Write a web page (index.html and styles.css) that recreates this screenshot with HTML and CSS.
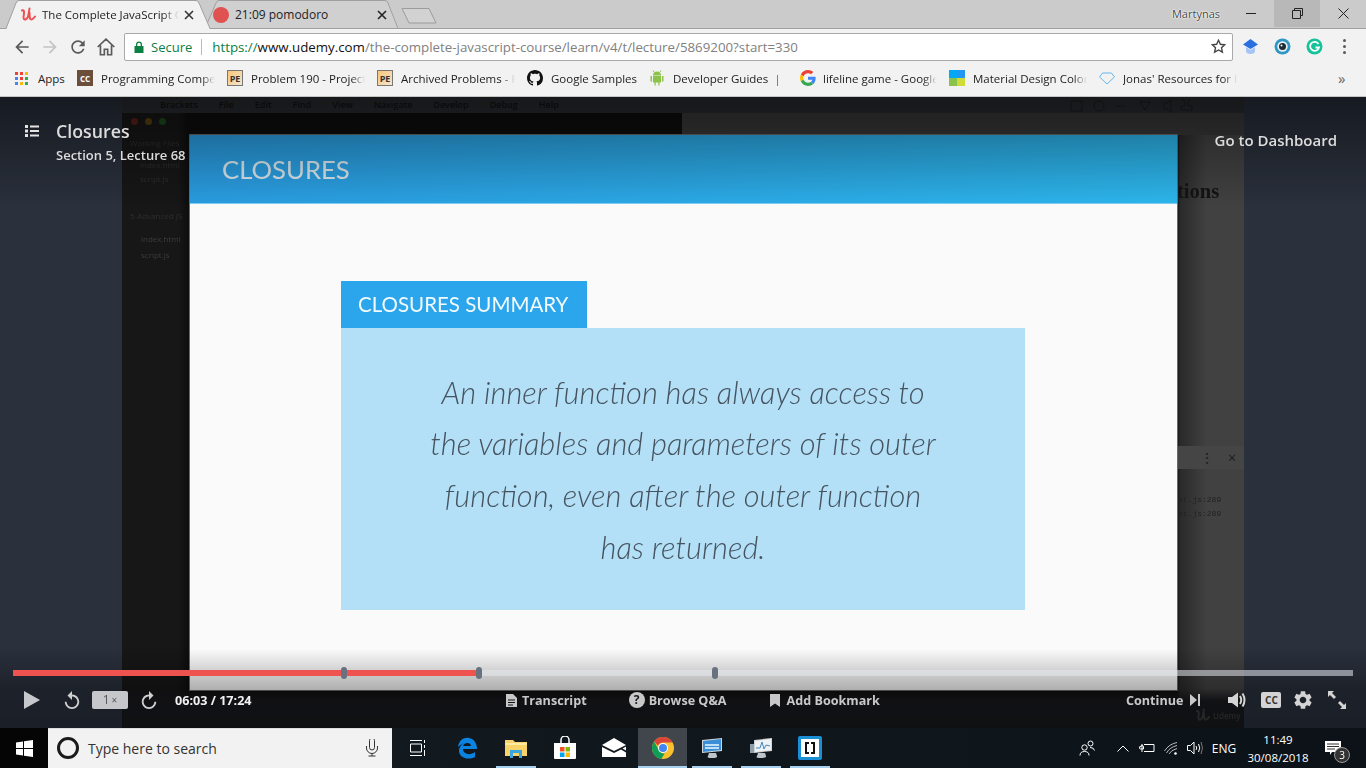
FILE: index.html
```html
<!DOCTYPE html>
<html>
  <head>
    <meta charset="UTF-8">
    <title>Closures - The Complete JavaScript Course</title>
    <link rel="stylesheet" href="styles.css">
  </head>
  <body>
    <div class="tabstrip">
      <svg class="tab-shapes" width="440" height="29" viewBox="0 0 440 29">
        <path d="M402 8.5h27l7 14.5h-27z" fill="#d2d2d2" stroke="#9c9c9c"/>
        <path d="M205 28.5L216 3q1-2.500 3-2.500h166q2 0 3 2.500l10 25.500" fill="#d0d0d0" stroke="#a0a0a0"/>
        <path d="M0 28.500h6L16 3q1-2.500 3-2.500h177q2 0 3 2.500l11 25.500h230" fill="#f2f2f2" stroke="#a0a0a0"/>
        <path d="M7 28.500h202" stroke="#f2f2f2" stroke-width="1.500"/>
      </svg>
      <div class="tab tab-active">
        <svg class="tab-icon" width="15" height="15" viewBox="0 0 15 15"><path d="M1 3.500q2-1 2 1.500 0 3-.5 5 0 3 2 2.500 2.500-1 3-5l1-6M8.500 5.500q0 4 .5 6 .8 1.500 2.500.5 1.500-1 2.500-2.500" fill="none" stroke="#ec5252" stroke-width="2" stroke-linecap="round"/></svg>
        <span class="tab-title">The Complete JavaScript Course</span>
        <svg class="tab-close" width="10" height="10" viewBox="0 0 10 10"><path d="M1 1l8 8M9 1l-8 8" stroke="#333" stroke-width="1.600"/></svg>
      </div>
      <div class="tab tab-second">
        <span class="tab-dot"></span>
        <span class="tab-title">21:09 pomodoro</span>
        <svg class="tab-close" width="10" height="10" viewBox="0 0 10 10"><path d="M1 1l8 8M9 1l-8 8" stroke="#222" stroke-width="1.600"/></svg>
      </div>
      <div class="window-controls">
        <span class="window-user">Martynas</span>
        <span class="window-btn"><svg width="11" height="11" viewBox="0 0 11 11"><path d="M0 5.500h10" stroke="#222"/></svg></span>
        <span class="window-btn window-btn-hover"><svg width="11" height="11" viewBox="0 0 11 11"><path d="M2.500 2.500V.5h8v7h-2M.5 2.500h8v8h-8z" fill="none" stroke="#222"/></svg></span>
        <span class="window-btn"><svg width="11" height="11" viewBox="0 0 11 11"><path d="M.5.5l10 10M10.500.5l-10 10" stroke="#222"/></svg></span>
      </div>
    </div>

    <div class="toolbar">
      <span class="tool-btn"><svg width="20" height="20" viewBox="0 0 24 24"><path d="M20 11H7.830l5.590-5.590L12 4l-8 8 8 8 1.410-1.410L7.830 13H20v-2z" fill="#5a5a5a"/></svg></span>
      <span class="tool-btn"><svg width="20" height="20" viewBox="0 0 24 24"><path d="M4 11h12.170l-5.590-5.590L12 4l8 8-8 8-1.410-1.410L16.170 13H4v-2z" fill="#c4c4c4"/></svg></span>
      <span class="tool-btn"><svg width="20" height="20" viewBox="0 0 24 24"><path d="M17.650 6.350C16.200 4.900 14.210 4 12 4c-4.420 0-7.990 3.580-7.990 8s3.570 8 7.990 8c3.730 0 6.840-2.550 7.730-6h-2.080c-.82 2.330-3.040 4-5.650 4-3.310 0-6-2.690-6-6s2.690-6 6-6c1.660 0 3.140.69 4.220 1.780L13 11h7V4l-2.350 2.350z" fill="#5a5a5a"/></svg></span>
      <span class="tool-btn"><svg width="20" height="20" viewBox="0 0 18 18"><path d="M1.500 9L9 2l7.500 7M4 7.500V16h3.500v-5h3v5H14V7.500" fill="none" stroke="#5a5a5a" stroke-width="1.500"/></svg></span>
      <div class="address">
        <svg width="10" height="12" viewBox="0 0 10 12"><path d="M2 5V3.500a3 3 0 0 1 6 0V5h1.500v7H.5V5zm1.300 0h3.400V3.500a1.700 1.700 0 0 0-3.400 0z" fill="#0b8043"/></svg>
        <span class="secure">Secure</span>
        <span class="address-sep"></span>
        <span class="url"><span class="url-scheme">https://</span><span class="url-host">www.udemy.com</span>/the-complete-javascript-course/learn/v4/t/lecture/5869200?start=330</span>
        <svg class="star" width="15" height="15" viewBox="0 0 15 15"><path d="M7.500 1.300l1.900 4 4.300.5-3.200 3 .9 4.400-3.900-2.200-3.900 2.200.9-4.400-3.200-3 4.300-.5z" fill="none" stroke="#444" stroke-width="1.400"/></svg>
      </div>
      <span class="ext-btn"><svg width="17" height="17" viewBox="0 0 17 17"><path d="M8.500 1L16 6.500 8.500 11 1 6.500z" fill="#2a6fe0"/><path d="M4 9v4q0 3 4.500 3t4.500-3V9l-4.500 3z" fill="#a6c4f7"/></svg></span>
      <span class="ext-btn"><svg width="17" height="17" viewBox="0 0 17 17"><circle cx="8.500" cy="8.500" r="8" fill="#2f97c4"/><circle cx="8.500" cy="8.500" r="5.200" fill="#e8f2f6"/><circle cx="8.500" cy="8.500" r="3.500" fill="#1b2a33"/><circle cx="7.500" cy="7.500" r="1" fill="#fff"/></svg></span>
      <span class="ext-btn"><svg width="17" height="17" viewBox="0 0 17 17"><circle cx="8.500" cy="8.500" r="8" fill="#15c39a"/><path d="M12.500 6A4.500 4.500 0 1 0 13 9.500H9.500" fill="none" stroke="#fff" stroke-width="1.800"/></svg></span>
      <span class="menu-dots"><i></i><i></i><i></i></span>
    </div>

    <div class="bookmarks">
      <div class="bookmark bookmark-apps">
        <span class="apps-grid"><i class="c1"></i><i class="c2"></i><i class="c3"></i><i class="c4"></i><i class="c1"></i><i class="c5"></i><i class="c4"></i><i class="c3"></i><i class="c5"></i></span>
        <span class="bookmark-label">Apps</span>
      </div>
      <div class="bookmark">
        <span class="fav-cc">CC</span>
        <span class="bookmark-label">Programming Compe</span>
      </div>
      <div class="bookmark">
        <span class="fav-pe">PE</span>
        <span class="bookmark-label">Problem 190 - Project</span>
      </div>
      <div class="bookmark">
        <span class="fav-pe">PE</span>
        <span class="bookmark-label">Archived Problems - P</span>
      </div>
      <div class="bookmark bookmark-github">
        <svg width="16" height="16" viewBox="0 0 16 16"><path d="M8 0C3.580 0 0 3.580 0 8c0 3.540 2.290 6.530 5.470 7.590.4.070.55-.17.55-.38 0-.19-.01-.82-.01-1.490-2.010.37-2.530-.49-2.690-.94-.09-.23-.48-.94-.82-1.130-.28-.15-.68-.52-.01-.53.63-.01 1.080.58 1.230.82.72 1.210 1.870.87 2.330.66.07-.52.28-.87.51-1.070-1.780-.2-3.640-.89-3.640-3.950 0-.87.31-1.590.82-2.150-.08-.2-.36-1.020.08-2.120 0 0 .67-.21 2.200.82.64-.18 1.320-.27 2-.27.68 0 1.360.09 2 .27 1.530-1.040 2.200-.82 2.200-.82.44 1.100.16 1.920.08 2.120.51.56.82 1.270.82 2.150 0 3.070-1.870 3.750-3.650 3.950.29.25.54.73.54 1.480 0 1.070-.01 1.930-.01 2.200 0 .21.15.46.55.38A8.013 8.013 0 0 0 16 8c0-4.420-3.580-8-8-8z" fill="#111"/></svg>
        <span class="bookmark-label">Google Samples</span>
      </div>
      <div class="bookmark bookmark-android">
        <svg width="16" height="16" viewBox="0 0 16 16"><path d="M4 5.500a4 4 0 0 1 8 0zM4 6h8v6.500H10.500V15.500h-1.200v-3H6.700v3H5.500v-3H4zM1.500 6h1.500v5.500H1.500zM13 6h1.500v5.500H13z" fill="#8bc34a"/><path d="M5 2L4 .5M11 2l1-1.500" stroke="#8bc34a"/></svg>
        <span class="bookmark-label">Developer Guides &nbsp;|&nbsp; A</span>
      </div>
      <div class="bookmark bookmark-google">
        <svg width="16" height="16" viewBox="0 0 48 48"><path d="M24 9.500c3.540 0 6.710 1.220 9.210 3.600l6.850-6.850C35.900 2.380 30.470 0 24 0 14.620 0 6.510 5.380 2.560 13.220l7.980 6.190C12.430 13.720 17.740 9.500 24 9.500z" fill="#EA4335"/><path d="M46.980 24.550c0-1.570-.15-3.090-.38-4.550H24v9.020h12.940c-.58 2.960-2.260 5.480-4.780 7.180l7.730 6c4.510-4.180 7.090-10.360 7.090-17.650z" fill="#4285F4"/><path d="M10.530 28.590c-.48-1.450-.76-2.990-.76-4.590s.27-3.140.76-4.590l-7.980-6.190C.92 16.460 0 20.120 0 24c0 3.880.92 7.540 2.560 10.780l7.970-6.190z" fill="#FBBC05"/><path d="M24 48c6.480 0 11.930-2.130 15.890-5.810l-7.730-6c-2.150 1.450-4.920 2.300-8.160 2.300-6.260 0-11.570-4.220-13.470-9.910l-7.980 6.190C6.510 42.620 14.620 48 24 48z" fill="#34A853"/></svg>
        <span class="bookmark-label">lifeline game - Google</span>
      </div>
      <div class="bookmark">
        <span class="fav-material"><i class="m1"></i><i class="m2"></i><i class="m3"></i><i class="m4"></i></span>
        <span class="bookmark-label">Material Design Color</span>
      </div>
      <div class="bookmark">
        <svg width="16" height="16" viewBox="0 0 16 16"><path d="M3.500 3h9L15.500 7 8 14 .5 7z" fill="none" stroke="#62b6ee"/></svg>
        <span class="bookmark-label">Jonas' Resources for B</span>
      </div>
      <span class="bookmark-more">»</span>
    </div>

    <div class="player">
      <div class="video">
        <div class="ghost">
          <div class="ghost-menu">
            <span>Brackets</span><span>File</span><span>Edit</span><span>Find</span><span>View</span><span>Navigate</span><span>Develop</span><span>Debug</span><span>Help</span>
          </div>
          <svg class="ghost-tools" width="130" height="14" viewBox="0 0 130 14"><path d="M1 2h11v10H1zM24 7a5 5 0 1 0 10 0 5 5 0 1 0-10 0M46 7h10M70 3l5 8 5-8zM94 4h3l4-3v12l-4-3h-3zM115 3a3 3 0 1 1 3 0v4h4v4h-11V7h4z" fill="none" stroke="#1c1d20"/></svg>
          <div class="ghost-panel"></div>
          <span class="ghost-light l1"></span><span class="ghost-light l2"></span><span class="ghost-light l3"></span>
          <span class="ghost-file f1">Working Files</span>
          <span class="ghost-file f2">index.html</span>
          <span class="ghost-file f3">script.js</span>
          <span class="ghost-file f4">5-Advanced JS</span>
          <span class="ghost-file f5">index.html</span>
          <span class="ghost-file f6">script.js</span>
          <span class="ghost-heading">tions</span>
          <div class="ghost-strip"><span>⋮</span><span>×</span></div>
          <span class="ghost-log g1">at.js:289</span>
          <span class="ghost-log g2">at.js:289</span>
        </div>
        <div class="slide">
          <div class="slide-header">CLOSURES</div>
          <div class="slide-body">
            <div class="summary-tab">CLOSURES SUMMARY</div>
            <div class="summary-box">
              <p>An inner function has always access to</p>
              <p>the variables and parameters of its outer</p>
              <p>function, even after the outer function</p>
              <p>has returned.</p>
            </div>
          </div>
        </div>
        <div class="watermark">
          <svg width="14" height="14" viewBox="0 0 15 15"><path d="M1 3.500q2-1 2 1.500 0 3-.5 5 0 3 2 2.500 2.500-1 3-5l1-6M8.500 5.500q0 4 .5 6 .8 1.500 2.500.5 1.500-1 2.500-2.500" fill="none" stroke="#3a3a3a" stroke-width="2" stroke-linecap="round"/></svg>
          Udemy
        </div>
      </div>

      <div class="scrim"></div>

      <div class="lecture-head">
        <svg width="14" height="12" viewBox="0 0 14 12"><path d="M0 0h3v3H0zM0 4.500h3v3H0zM0 9h3v3H0zM5 .5h9v2H5zM5 5h9v2H5zM5 9.500h9v2H5z" fill="#e4e4e4"/></svg>
        <div class="lecture-text">
          <div class="lecture-title">Closures</div>
          <div class="lecture-sub">Section 5, Lecture 68</div>
        </div>
      </div>
      <div class="dashboard-link">Go to Dashboard</div>

      <div class="progress">
        <div class="progress-fill"></div>
        <span class="marker m-a"></span>
        <span class="marker m-b"></span>
        <span class="marker m-c"></span>
      </div>

      <div class="controls">
        <div class="controls-left">
          <svg width="16" height="18" viewBox="0 0 16 18"><path d="M0 0l16 9-16 9z" fill="#c6c8cc"/></svg>
          <svg class="ctl-replay" width="16" height="18" viewBox="4 1 16 20"><path d="M12 5V1L7 6l5 5V7c3.310 0 6 2.690 6 6s-2.690 6-6 6-6-2.690-6-6H4c0 4.420 3.580 8 8 8s8-3.580 8-8-3.580-8-8-8z" fill="#d0d0d0"/></svg>
          <span class="speed">1<small>×</small></span>
          <svg class="ctl-forward" width="16" height="18" viewBox="4 1 16 20"><path d="M12 5V1l5 5-5 5V7c-3.310 0-6 2.690-6 6s2.690 6 6 6 6-2.690 6-6h2c0 4.420-3.580 8-8 8s-8-3.580-8-8 3.580-8 8-8z" fill="#d0d0d0"/></svg>
          <span class="time">06:03 / 17:24</span>
        </div>
        <div class="controls-center">
          <span class="ctl-item ctl-transcript">
            <svg width="11" height="13" viewBox="0 0 11 13"><path d="M0 0h7l4 4v9H0zM2 5.500v1h7v-1zM2 8v1h7V8zM2 10.500v1h5v-1z" fill="#c8c8c8" fill-rule="evenodd"/></svg>
            Transcript
          </span>
          <span class="ctl-item ctl-qa">
            <span class="qa-icon">?</span>
            Browse Q&amp;A
          </span>
          <span class="ctl-item ctl-bookmark">
            <svg width="10" height="13" viewBox="0 0 10 13"><path d="M0 0h10v13L5 9.500 0 13z" fill="#c8c8c8"/></svg>
            Add Bookmark
          </span>
        </div>
        <div class="controls-right">
          <span class="ctl-item ctl-continue">
            Continue
            <svg width="10" height="12" viewBox="0 0 10 12"><path d="M0 0l7 6-7 6zM8 0h2v12H8z" fill="#c8c8c8"/></svg>
          </span>
          <svg class="ctl-volume" width="19" height="16" viewBox="0 0 19 16"><path d="M0 5h4l6-4.500v15L4 11H0z" fill="#d4d4d4"/><path d="M12 4q2.500 4 0 8M14.500 1.500q4 6.500 0 13" fill="none" stroke="#d4d4d4" stroke-width="2"/></svg>
          <span class="cc-badge">CC</span>
          <svg class="ctl-gear" width="22" height="22" viewBox="0 0 24 24"><path d="M19.140 12.940c.04-.3.06-.61.06-.94 0-.32-.02-.64-.07-.94l2.030-1.580a.49.49 0 0 0 .12-.61l-1.920-3.320a.488.488 0 0 0-.59-.22l-2.390.96c-.5-.38-1.030-.7-1.620-.94l-.36-2.540a.484.484 0 0 0-.48-.41h-3.840c-.24 0-.43.17-.47.41l-.36 2.540c-.59.24-1.130.57-1.620.94l-2.390-.96c-.22-.08-.47 0-.59.22L2.740 8.870c-.12.21-.08.47.12.61l2.030 1.580c-.05.3-.09.63-.09.94s.02.64.07.94l-2.030 1.580a.49.49 0 0 0-.12.61l1.920 3.320c.12.22.37.29.59.22l2.390-.96c.5.38 1.030.7 1.620.94l.36 2.540c.05.24.24.41.48.41h3.840c.24 0 .44-.17.47-.41l.36-2.540c.59-.24 1.130-.56 1.620-.94l2.390.96c.22.08.47 0 .59-.22l1.920-3.320c.12-.22.07-.47-.12-.61l-2.010-1.580zM12 15.600c-1.980 0-3.600-1.620-3.600-3.600s1.620-3.600 3.600-3.600 3.600 1.620 3.600 3.600-1.620 3.600-3.600 3.600z" fill="#d4d4d4"/></svg>
          <svg class="ctl-expand" width="20" height="20" viewBox="0 0 20 20"><path d="M1 7V1h6L5 3l4 4-2 2-4-4zM19 13v6h-6l2-2-4-4 2-2 4 4z" fill="#d4d4d4"/></svg>
        </div>
      </div>
    </div>

    <div class="taskbar">
      <div class="start">
        <svg width="17" height="17" viewBox="0 0 17 17"><path d="M0 2.500L7 1.500v6.500H0zM8 1.300L17 0v8H8zM0 9h7v6.500l-7-1zM8 9h9v8l-9-1.300z" fill="#fff"/></svg>
      </div>
      <div class="search">
        <span class="cortana"></span>
        <span class="search-text">Type here to search</span>
        <svg class="search-mic" width="14" height="18" viewBox="0 0 14 18"><path d="M4.500 1.500a2.500 2.500 0 0 1 5 0v7a2.500 2.500 0 0 1-5 0zM1.500 7v2a5.500 5.500 0 0 0 11 0V7M7 14.500V17M3.500 17h7" fill="none" stroke="#333"/></svg>
      </div>
      <div class="task-icons">
        <span class="task"><svg width="16" height="16" viewBox="0 0 16 16"><path d="M0 .5h12M0 15.500h12M.5 4h11v8H.5zM14.500 0v3M14.500 5v3M14.500 10v6" fill="none" stroke="#fff"/></svg></span>
        <span class="task"><svg width="24" height="24" viewBox="0 0 24 24"><path d="M3 11C4 4 9 1 14 2c5 1 8 5 8 11H8c0 5 7 7 12 3v5c-8 4-16 0-16-6 0-4 3-7 5-8-2 1-4 2-6 4zM8 10h8c0-4-7-4-8 0z" fill="#0a84e0"/></svg></span>
        <span class="task task-running"><svg width="22" height="20" viewBox="0 0 22 20"><path d="M0 2h8l2 2h12v14H0z" fill="#f6d469"/><path d="M0 5h22v2H0z" fill="#fdeaa0"/><path d="M5 12h12v8h-3v-5H8v5H5z" fill="#3aa6dd"/></svg></span>
        <span class="task"><svg width="24" height="24" viewBox="0 0 24 24"><path d="M1 7h22v15q0 1-1 1H2q-1 0-1-1z" fill="#fff"/><path d="M8 7V4a4 4 0 0 1 8 0v3" fill="none" stroke="#fff" stroke-width="1.500"/><path d="M7 11h4.500v4.500H7z" fill="#f25022"/><path d="M12.500 11H17v4.500h-4.500z" fill="#7fba00"/><path d="M7 16.500h4.500V21H7z" fill="#00a4ef"/><path d="M12.500 16.500H17V21h-4.500z" fill="#ffb900"/></svg></span>
        <span class="task"><svg width="24" height="20" viewBox="0 0 24 20"><path d="M0 7L12 0l12 7-12 6z" fill="#fff"/><path d="M0 9l12 6 7-3.500 5 3V19H0z" fill="#fff"/><path d="M24 8.500v4l-3.500-2z" fill="#fff"/></svg></span>
        <span class="task task-running task-active">
          <svg width="22" height="22" viewBox="0 0 22 22"><circle cx="11" cy="11" r="11" fill="#fbc02d"/><path d="M11 0a11 11 0 0 1 9.500 5.500H11a5.500 5.500 0 0 0-5 3.300L2.100 4.500A11 11 0 0 1 11 0z" fill="#db4437"/><path d="M2.100 4.500L6.800 13a5.500 5.500 0 0 0 5.900 3.300L9.300 21.900A11 11 0 0 1 2.100 4.500z" fill="#0f9d58"/><circle cx="11" cy="11" r="5" fill="#fff"/><circle cx="11" cy="11" r="4" fill="#4285f4"/></svg>
        </span>
        <span class="task task-running"><svg width="24" height="24" viewBox="0 0 24 24"><path d="M2 4l20-2v13L2 17z" fill="#cfd8dc"/><path d="M3 5l18-2v11L3 16z" fill="#3b8fd8"/><path d="M5 8h14v2H5zM5 11h14v2H5z" fill="#bfe0f8"/><path d="M9 17h7l1 3q1 2-5 2t-4-2z" fill="#bfc5c9"/></svg></span>
        <span class="task task-running"><svg width="24" height="24" viewBox="0 0 24 24"><path d="M5 4l18-2v13L5 17z" fill="#cfd4d6"/><path d="M6 5l16-2v11L6 16z" fill="#eef2f4"/><path d="M7 12l4 0 2-6 2 7 2-4 4 1" fill="none" stroke="#4a87b8"/><path d="M1 8h4v9H1z" fill="#8da0a8"/><path d="M9 17h7l1 3q1 2-5 2t-4-2z" fill="#bfc5c9"/></svg></span>
        <span class="task task-running">
          <svg width="24" height="24" viewBox="0 0 24 24"><rect width="24" height="24" rx="2" fill="#1a8fd6"/><rect x="3" y="3" width="18" height="18" fill="#fff"/><path d="M11 6H7v12h4v-2H9V8h2zM13 6h4v12h-4v-2h2V8h-2z" fill="#111"/></svg>
        </span>
      </div>
      <div class="tray">
        <span class="tray-people"><svg width="16" height="16" viewBox="0 0 16 16"><circle cx="5.500" cy="7.500" r="2.700" fill="none" stroke="#fff"/><circle cx="11.500" cy="3.500" r="2.500" fill="none" stroke="#fff"/><path d="M1 15.500q0-4 4.500-4t4.500 4M11 7.500q4 0 4.500 3" fill="none" stroke="#fff"/></svg></span>
        <span class="tray-chevron"><svg width="12" height="7" viewBox="0 0 12 7"><path d="M.5 6.500L6 1l5.500 5.500" fill="none" stroke="#fff"/></svg></span>
        <span class="tray-battery"><svg width="16" height="12" viewBox="0 0 16 12"><path d="M5 2.500h10v7H5M3 2v8M0 5h1.500a1.500 1.500 0 0 1 3 0v2h-3a1 1 0 0 1-1-1z" fill="none" stroke="#fff"/></svg></span>
        <span class="tray-wifi"><svg width="14" height="13" viewBox="0 0 14 13"><path d="M.5 9Q5 2 13 .5M2.500 11Q6 5 13 3.500M5 12q2-4 8-5.500" fill="none" stroke="#b8bcbf"/><circle cx="11.500" cy="11.500" r="1.300" fill="#fff"/></svg></span>
        <span class="tray-volume"><svg width="16" height="14" viewBox="0 0 16 14"><path d="M.5 4.500h3L7 1v12L3.500 9.500h-3z" fill="none" stroke="#fff"/><path d="M9 5q1.500 2 0 4M11.500 3q2.500 4 0 8" fill="none" stroke="#fff"/><path d="M14 1q3 6 0 12" fill="none" stroke="#777"/></svg></span>
        <span class="tray-lang">ENG</span>
        <span class="tray-clock"><span>11:49</span><span>30/08/2018</span></span>
        <span class="tray-notify">
          <svg width="16" height="14" viewBox="0 0 16 14"><path d="M0 0h16v11H7l-2 3v-3H0z" fill="#fff"/><path d="M2 3h12M2 5.500h12M2 8h8" stroke="#333"/></svg>
          <span class="notify-badge">3</span>
        </span>
      </div>
    </div>
  </body>
</html>
```

FILE: styles.css
```css
html, body {
  margin: 0;
  height: 768px;
  overflow: hidden;
}

body {
  font-family: "Open Sans", "Noto Sans", sans-serif;
  background: #000;
}

svg {
  display: block;
  flex: none;
}

/* tab strip */
.tabstrip {
  position: relative;
  display: flex;
  height: 29px;
  background: #cbcbcb;
  box-shadow: inset 0 -1px 0 #a0a0a0;
  font-size: 12px;
  color: #222;
}

.tab-shapes {
  position: absolute;
  left: 0;
  top: 0;
}

.tab {
  position: relative;
  display: flex;
  align-items: center;
  height: 29px;
  box-sizing: border-box;
}

.tab-active {
  width: 205px;
  padding-left: 21px;
  font-size: 11.500px;
}

.tab-active .tab-title {
  -webkit-mask-image: linear-gradient(to right, #000 88%, transparent);
  mask-image: linear-gradient(to right, #000 88%, transparent);
}

.tab-second {
  width: 193px;
  padding-left: 8px;
}

.tab-icon {
  margin-right: 6px;
}

.tab-dot {
  width: 16px;
  height: 16px;
  margin-right: 6px;
  border-radius: 50%;
  background: #e05252;
}

.tab-title {
  flex: 1;
  overflow: hidden;
  white-space: nowrap;
}

.tab-close {
  margin: 0 11px 0 5px;
}

.window-controls {
  position: relative;
  display: flex;
  align-items: flex-start;
  margin-left: auto;
}

.window-user {
  margin: 6px 8px 0 0;
  font-size: 11px;
  color: #444;
  text-shadow: 0 0 2px #fff, 0 0 2px #fff, 0 0 1px #fff;
}

.window-btn {
  display: flex;
  align-items: center;
  justify-content: center;
  width: 46px;
  height: 27px;
}

.window-btn-hover {
  background: #b8b8b8;
}

/* toolbar */
.toolbar {
  display: flex;
  align-items: center;
  height: 35px;
  padding: 0 0 0 8px;
  background: #f2f2f2;
}

.tool-btn, .ext-btn {
  display: flex;
  align-items: center;
  justify-content: center;
  width: 28px;
  height: 28px;
}

.ext-btn {
  width: 32px;
}

.address {
  display: flex;
  align-items: center;
  box-sizing: border-box;
  width: 1109px;
  height: 28px;
  margin: 0 1px 0 4px;
  padding: 0 6px 0 9px;
  background: #fff;
  border: 1px solid #a9a9a9;
  border-radius: 2px;
}

.secure {
  margin-left: 7px;
  font-size: 13px;
  color: #0b8043;
}

.address-sep {
  width: 1px;
  height: 16px;
  margin: 0 10px 0 9px;
  background: #bbb;
}

.url {
  flex: 1;
  font-size: 13.300px;
  color: #808080;
  white-space: nowrap;
}

.url-scheme {
  color: #0b8043;
}

.url-host {
  color: #111;
}

.menu-dots {
  display: flex;
  flex-direction: column;
  align-items: center;
  gap: 3px;
  width: 28px;
}

.menu-dots i {
  width: 3px;
  height: 3px;
  border-radius: 50%;
  background: #5a5a5a;
}

/* bookmarks */
.bookmarks {
  display: flex;
  align-items: center;
  box-sizing: border-box;
  height: 33px;
  padding: 0 0 4px 15px;
  background: #f2f2f2;
  border-bottom: 1px solid #c4c4c4;
  font-size: 11.500px;
  color: #222;
}

.bookmark {
  display: flex;
  flex: none;
  align-items: center;
  gap: 8px;
  width: 150px;
}

.bookmark-apps {
  gap: 10px;
  width: 62px;
}

.bookmark-github {
  width: 122px;
}

.bookmark-android {
  width: 151px;
}

.bookmark-google {
  gap: 7px;
  width: 149px;
}

.bookmark-label {
  width: 114px;
  overflow: hidden;
  white-space: nowrap;
  -webkit-mask-image: linear-gradient(to right, #000 88%, transparent);
  mask-image: linear-gradient(to right, #000 88%, transparent);
}

.bookmark-apps .bookmark-label {
  width: auto;
  -webkit-mask-image: none;
  mask-image: none;
}

.bookmark-more {
  margin-left: 89px;
  font-size: 15px;
  color: #666;
}

.apps-grid {
  display: grid;
  grid-template-columns: repeat(3, 3px);
  gap: 2px;
}

.apps-grid i {
  height: 3px;
}

.c1 { background: #ea4335; }
.c2 { background: #f44336; }
.c3 { background: #fbbc05; }
.c4 { background: #4285f4; }
.c5 { background: #34a853; }

.fav-cc {
  display: flex;
  align-items: center;
  justify-content: center;
  width: 16px;
  height: 16px;
  background: #6b4e3a;
  color: #fff;
  font-size: 8px;
  font-weight: 700;
}

.fav-pe {
  display: flex;
  align-items: center;
  justify-content: center;
  box-sizing: border-box;
  width: 16px;
  height: 16px;
  background: linear-gradient(135deg, #f8c678, #f3e6d0);
  border: 1px solid #777;
  color: #333;
  font-size: 9px;
  font-weight: 700;
}

.fav-material {
  display: grid;
  grid-template-columns: 8px 8px;
  grid-template-rows: 8px 8px;
}

.m1 { background: #03a9f4; }
.m2 { background: #2196f3; }
.m3 { background: #8bc34a; }
.m4 { background: #cddc39; }

/* player */
.player {
  position: relative;
  display: flex;
  justify-content: center;
  height: 631px;
  background: #2a303c;
  overflow: hidden;
}

.video {
  position: relative;
  box-sizing: border-box;
  width: 1122px;
  height: 631px;
  padding: 38px 67px 0 68px;
  background:
    linear-gradient(to bottom, transparent 592px, #191a1e 604px),
    linear-gradient(to right, #171717 0, #171717 56px, #0e0e0e 66px, #0e0e0e 1055px, #2a2a2a 1058px, #414141 1085px, #414141 100%);
}

.ghost {
  position: absolute;
  left: 0;
  top: 0;
  width: 100%;
  height: 100%;
  filter: blur(0.7px);
}

.ghost-menu {
  display: flex;
  gap: 21px;
  height: 16px;
  padding-left: 38px;
  background: #2a2c30;
  font-size: 9px;
  line-height: 16px;
  font-weight: 600;
  color: #101114;
}

.ghost-tools {
  position: absolute;
  left: 948px;
  top: 2px;
}

.ghost-panel {
  position: absolute;
  left: 560px;
  top: 16px;
  width: 562px;
  height: 22px;
  background: #383838;
}

.ghost-light {
  position: absolute;
  top: 21px;
  width: 7px;
  height: 7px;
  border-radius: 50%;
}

.l1 { left: 9px; background: #5a2018; }
.l2 { left: 23px; background: #5a4010; }
.l3 { left: 37px; background: #1c4a1c; }

.ghost-file {
  position: absolute;
  left: 8px;
  font-size: 8px;
  color: #2e2e2e;
  white-space: nowrap;
}

.f1 { top: 40px; }
.f2 { top: 62px; left: 18px; }
.f3 { top: 76px; left: 18px; }
.f4 { top: 113px; }
.f5 { top: 136px; left: 19px; color: #3c3c3c; }
.f6 { top: 152px; left: 19px; color: #3c3c3c; }

.ghost-heading {
  position: absolute;
  left: 1055px;
  top: 83px;
  font-family: "Liberation Serif", serif;
  font-size: 20.500px;
  font-weight: 700;
  color: #141414;
}

.ghost-strip {
  position: absolute;
  left: 1055px;
  top: 349px;
  display: flex;
  justify-content: flex-end;
  gap: 14px;
  box-sizing: border-box;
  width: 67px;
  height: 23px;
  padding-right: 8px;
  background: #454545;
  font-size: 14px;
  line-height: 23px;
  color: #1c1c1c;
}

.ghost-log {
  position: absolute;
  left: 1056px;
  font-family: "Liberation Mono", monospace;
  font-size: 8px;
  color: #222;
}

.g1 { top: 398px; }
.g2 { top: 412px; }

.slide {
  position: relative;
  display: flex;
  flex-direction: column;
  width: 987px;
  height: 555px;
  background: #fafafa;
  box-shadow: 0 0 0 1px #6a6a6a;
  font-family: Lato, "Open Sans", sans-serif;
}

.slide-header {
  box-sizing: border-box;
  height: 69px;
  padding-left: 32px;
  background: linear-gradient(to right, #2a9ce0, #2db6ec);
  border-bottom: 1px solid #7fcff2;
  font-size: 25.700px;
  line-height: 69px;
  color: #dbe9ef;
}

.slide-body {
  padding: 77px 0 0 151px;
}

.summary-tab {
  box-sizing: border-box;
  width: 246px;
  height: 47px;
  padding-left: 17px;
  background: #2ba5ec;
  font-size: 20.500px;
  line-height: 47px;
  color: #f2fafe;
}

.summary-box {
  box-sizing: border-box;
  display: flex;
  flex-direction: column;
  justify-content: center;
  align-items: center;
  width: 684px;
  height: 282px;
  padding-top: 2px;
  background: #b3e0f7;
  font-size: 30.850px;
  font-style: italic;
  font-weight: 300;
  color: #46535f;
}

.summary-box p {
  margin: 0;
  line-height: 51.700px;
  white-space: nowrap;
}

.watermark {
  position: absolute;
  left: 1074px;
  top: 611px;
  display: flex;
  align-items: center;
  gap: 3px;
  font-size: 8px;
  font-weight: 600;
  color: #3a3a3a;
}

.scrim {
  position: absolute;
  left: 0;
  top: 0;
  width: 100%;
  height: 100%;
  background:
    linear-gradient(to bottom, rgba(0, 0, 0, 0.45) 0, rgba(0, 0, 0, 0) 108px),
    linear-gradient(to bottom, rgba(0, 0, 0, 0) 552px, rgba(0, 0, 0, 0.3) 593px, rgba(0, 0, 0, 0.35) 631px);
}

.lecture-head {
  position: absolute;
  left: 25px;
  top: 24px;
  display: flex;
  gap: 17px;
  color: #dcdcdc;
  font-weight: 600;
}

.lecture-head svg {
  margin-top: 4px;
}

.lecture-title {
  font-size: 17.800px;
  line-height: 20px;
}

.lecture-sub {
  margin-top: 5px;
  font-size: 13px;
  line-height: 18px;
  white-space: nowrap;
}

.dashboard-link {
  position: absolute;
  right: 29px;
  top: 33px;
  font-size: 15px;
  line-height: 20px;
  font-weight: 600;
  color: #dcdcdc;
}

.progress {
  position: absolute;
  left: 13px;
  top: 573px;
  width: 1340px;
  height: 6px;
  background: rgba(230, 232, 238, 0.55);
}

.progress-fill {
  width: 466px;
  height: 6px;
  background: #ef5350;
}

.marker {
  position: absolute;
  top: -3px;
  width: 6px;
  height: 12px;
  border-radius: 3px;
  background: #687180;
}

.m-a { left: 328px; }
.m-b { left: 463px; }
.m-c { left: 699px; }

.controls {
  position: absolute;
  left: 0;
  top: 591px;
  display: grid;
  grid-template-columns: 482px 620px 1fr;
  align-items: center;
  box-sizing: border-box;
  width: 100%;
  height: 24px;
  padding-left: 24px;
  font-size: 12.600px;
  font-weight: 700;
  color: #c8c8c8;
}

.controls-left, .controls-center, .controls-right, .ctl-item {
  display: flex;
  align-items: center;
}

.ctl-replay {
  margin-left: 24px;
}

.speed {
  box-sizing: border-box;
  width: 36px;
  height: 18px;
  margin-left: 12px;
  border-radius: 2px;
  background: #c5c7cb;
  font-size: 12px;
  font-weight: 400;
  line-height: 18px;
  text-align: center;
  color: #555;
}

.speed small {
  margin-left: 2px;
  font-size: 10px;
}

.ctl-forward {
  margin-left: 13px;
}

.time {
  margin-left: 18px;
  color: #f0f0f0;
}

.ctl-transcript {
  gap: 5px;
}

.ctl-qa {
  gap: 4px;
  margin-left: 42px;
}

.qa-icon {
  width: 16px;
  height: 16px;
  border-radius: 50%;
  background: #c8c8c8;
  font-size: 12px;
  line-height: 16px;
  text-align: center;
  color: #17191d;
}

.ctl-bookmark {
  gap: 7px;
  margin-left: 43px;
}

.ctl-continue {
  gap: 7px;
}

.ctl-volume {
  margin-left: 28px;
}

.cc-badge {
  width: 20px;
  height: 16px;
  margin-left: 14px;
  border-radius: 2px;
  background: #d4d4d4;
  font-size: 10px;
  line-height: 16px;
  text-align: center;
  color: #333;
}

.ctl-gear {
  margin-left: 11px;
}

.ctl-expand {
  margin-left: 13px;
}

/* taskbar */
.taskbar {
  display: flex;
  height: 40px;
  background: linear-gradient(to right, #141c22, #0f171d 60%, #0c1217);
  color: #fff;
}

.start {
  display: flex;
  align-items: center;
  justify-content: center;
  width: 48px;
  background: #050505;
}

.search {
  display: flex;
  align-items: center;
  box-sizing: border-box;
  width: 344px;
  padding: 0 13px 0 9px;
  background: #f2f2f2;
  box-shadow: inset 0 1px 0 #ddd;
}

.cortana {
  box-sizing: border-box;
  width: 22px;
  height: 22px;
  border: 3px solid #1a1a1a;
  border-radius: 50%;
}

.search-text {
  flex: 1;
  margin-left: 9px;
  font-size: 14px;
  color: #333;
}

.task-icons {
  display: flex;
  padding-left: 1px;
}

.task {
  position: relative;
  display: flex;
  align-items: center;
  justify-content: center;
  width: 49px;
}

.task-running::after {
  content: "";
  position: absolute;
  left: 5px;
  right: 4px;
  bottom: 0;
  height: 2px;
  background: #a5d0f0;
}

.task-active {
  background: #40464c;
}

.task-active::after {
  left: 0;
  right: 0;
}

.tray {
  display: flex;
  align-items: center;
  margin-left: auto;
  padding-right: 14px;
  font-size: 12px;
}

.tray span {
  flex: none;
}

.tray-people, .tray-chevron, .tray-battery, .tray-wifi, .tray-volume, .tray-lang, .tray-notify {
  display: flex;
  justify-content: center;
}

.tray-people { width: 24px; margin-right: 12px; }
.tray-chevron { width: 24px; }
.tray-battery { width: 23px; }
.tray-wifi { width: 26px; }
.tray-volume { width: 22px; }
.tray-lang { width: 36px; }

.tray-clock {
  display: flex;
  flex-direction: column;
  align-items: center;
  gap: 1px;
  width: 72px;
  font-size: 11.500px;
  line-height: 17px;
}

.tray-notify {
  position: relative;
  width: 38px;
}

.notify-badge {
  position: absolute;
  left: 20px;
  top: 6px;
  box-sizing: border-box;
  width: 16px;
  height: 16px;
  border: 1px solid #999;
  border-radius: 50%;
  background: #333;
  font-size: 10px;
  line-height: 14px;
  text-align: center;
}
```
